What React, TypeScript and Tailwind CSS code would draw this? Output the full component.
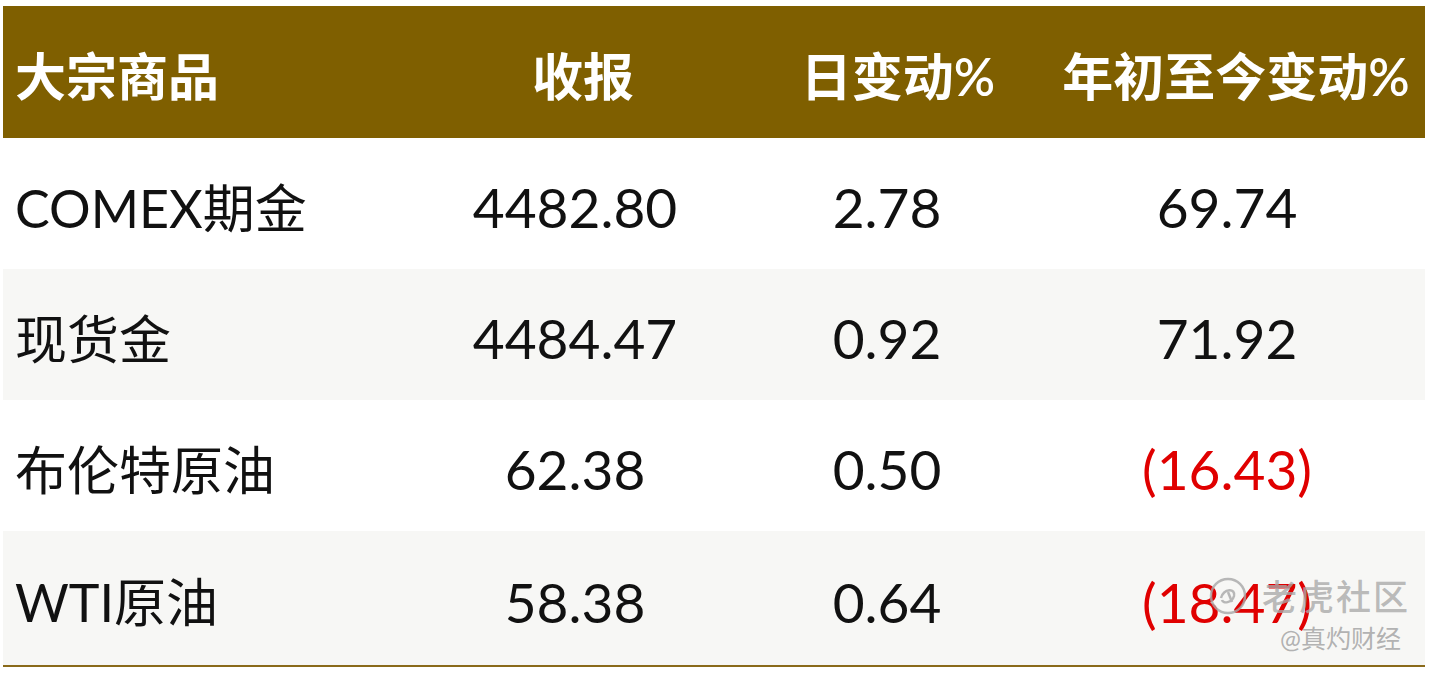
const rows = [
  { name: 'COMEX期金', close: '4482.80', day: '2.78', ytd: '69.74', neg: false },
  { name: '现货金', close: '4484.47', day: '0.92', ytd: '71.92', neg: false },
  { name: '布伦特原油', close: '62.38', day: '0.50', ytd: '(16.43)', neg: true },
  { name: 'WTI原油', close: '58.38', day: '0.64', ytd: '(18.47)', neg: true },
];

const font = { fontFamily: 'Lato, "Noto Sans CJK SC", sans-serif' };

export default function App() {
  return (
    <div className="w-[1431px] h-[673px] bg-white pt-[6px] pl-[3px] relative overflow-hidden" style={font}>
      <div className="w-[1422px]">
        {/* Header */}
        <div className="grid grid-cols-[418px_314px_320px_1fr] h-[132px] bg-[#7f5f00] text-white font-semibold text-[51px] items-center pt-[10px]">
          <div className="pl-[12px]">大宗商品</div>
          <div className="text-center pl-[10px]">收报</div>
          <div className="text-center pl-[6px]">日变动%</div>
          <div className="text-center pr-[8px]">年初至今变动%</div>
        </div>

        {/* Rows */}
        {rows.map((r, i) => (
          <div
            key={r.name}
            className={`grid grid-cols-[418px_314px_320px_1fr] items-center text-[55px] font-normal text-[#111] pt-[8px] ${
              i % 2 === 1 ? 'bg-[#f7f7f5]' : 'bg-white'
            } ${i === 3 ? 'h-[134px]' : 'h-[131px]'}`}
          >
            <div className="pl-[12px] text-[52px]">{r.name}</div>
            <div className="text-center pr-[6px]">{r.close}</div>
            <div className="text-center pr-[16px]">{r.day}</div>
            <div className={`text-center pr-[26px] ${r.neg ? 'text-[#e00000]' : ''}`}>{r.ytd}</div>
          </div>
        ))}
        <div className="h-[2px] bg-[#8a6a1a]" />
      </div>

      {/* Watermark */}
      <div className="absolute left-[1208px] top-[570px] flex items-center gap-[14px]">
        <svg width="40" height="40" viewBox="0 0 40 40" fill="none" stroke="#a8a8a8" strokeWidth="2.5" opacity="0.8">
          <circle cx="20" cy="20" r="17" />
          <path d="M13 22 C16 12, 28 12, 26 20 C24 27, 15 28, 14 24" />
          <path d="M20 16 L24 26" />
        </svg>
        <span className="text-[35px] font-medium tracking-[2px] text-[#a9a9a9]/80">老虎社区</span>
      </div>
      <div className="absolute left-[1280px] top-[620px] text-[25px] text-[#a9a9a9]/90">@真灼财经</div>
    </div>
  );
}
